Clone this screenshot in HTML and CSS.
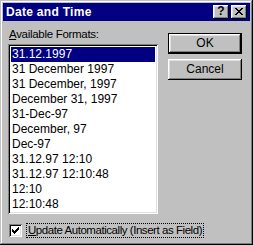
FILE: index.html
```html
<!DOCTYPE html>
<html>
<head>
<meta charset="utf-8">
<link rel="stylesheet" href="styles.css">
</head>
<body>
<div class="dialog">
  <div class="titlebar">
    <span class="title">Date and Time</span>
    <div class="tbtns">
      <div class="tbtn"><span class="q">?</span></div>
      <div class="tbtn">
        <svg width="8" height="7" viewBox="0 0 8 7" shape-rendering="crispEdges"><path d="M0 0h2v1h-2zM6 0h2v1h-2zM1 1h2v1h-2zM5 1h2v1h-2zM2 2h4v1h-4zM3 3h2v1h-2zM2 4h4v1h-4zM1 5h2v1h-2zM5 5h2v1h-2zM0 6h2v1h-2zM6 6h2v1h-2z" fill="#000"/></svg>
      </div>
    </div>
  </div>
  <div class="content">
    <div class="main">
      <div class="left">
        <div class="label"><u>A</u>vailable Formats:</div>
        <div class="list">
          <div class="item selected">31.12.1997</div>
          <div class="item">31 December 1997</div>
          <div class="item">31 December, 1997</div>
          <div class="item">December 31, 1997</div>
          <div class="item">31-Dec-97</div>
          <div class="item">December, 97</div>
          <div class="item">Dec-97</div>
          <div class="item">31.12.97 12:10</div>
          <div class="item">31.12.97 12:10:48</div>
          <div class="item">12:10</div>
          <div class="item">12:10:48</div>
        </div>
      </div>
      <div class="right">
        <div class="btn default"><div class="btn-inner">OK</div></div>
        <div class="btn"><div class="btn-inner">Cancel</div></div>
      </div>
    </div>
    <div class="check-row">
      <span class="checkbox">
        <svg width="7" height="7" viewBox="0 0 7 7" shape-rendering="crispEdges"><path d="M0 2h1v3h-1zM1 3h1v3h-1zM2 4h1v3h-1zM3 3h1v3h-1zM4 2h1v3h-1zM5 1h1v3h-1zM6 0h1v3h-1z" fill="#000"/></svg>
      </span>
      <span class="check-label"><u>U</u>pdate Automatically (Insert as Field)</span>
    </div>
  </div>
</div>
</body>
</html>
```

FILE: styles.css
```css
html, body {
  margin: 0;
  padding: 0;
  background: #c0c0c0;
}

.dialog {
  width: 253px;
  height: 245px;
  box-sizing: border-box;
  padding: 3px;
  background: #c0c0c0;
  box-shadow: inset -1px -1px #000, inset 1px 1px #c0c0c0, inset -2px -2px #808080, inset 2px 2px #fff;
  font-family: "Liberation Sans", Arial, sans-serif;
  font-size: 12px;
  color: #000;
  display: flex;
  flex-direction: column;
}

.titlebar {
  height: 18px;
  background: #000080;
  color: #fff;
  display: flex;
  align-items: center;
  justify-content: space-between;
  padding: 0 3px 0 3px;
}

.title {
  font-weight: bold;
  font-size: 12px;
  line-height: 18px;
  letter-spacing: 0.3px;
}

.tbtns {
  display: flex;
  gap: 2px;
}

.tbtn {
  width: 16px;
  height: 14px;
  box-sizing: border-box;
  background: #c0c0c0;
  box-shadow: inset -1px -1px #000, inset 1px 1px #fff, inset -2px -2px #808080, inset 2px 2px #dfdfdf;
  display: flex;
  align-items: center;
  justify-content: center;
  padding-bottom: 1px;
}

.q {
  color: #000;
  font-weight: bold;
  font-size: 12px;
  line-height: 11px;
}

.content {
  flex: 1;
  display: flex;
  flex-direction: column;
  padding: 6px 8px 0 5px;
}

.main {
  display: flex;
  gap: 10px;
}

.left {
  display: flex;
  flex-direction: column;
}

.label {
  line-height: 15px;
  padding-left: 1px;
  margin-bottom: 2px;
  font-size: 11.5px;
  letter-spacing: -0.3px;
}

.list {
  width: 150px;
  height: 170px;
  box-sizing: border-box;
  background: #fff;
  padding: 3px 3px 2px 3px;
  box-shadow: inset 1px 1px #808080, inset -1px -1px #fff, inset 2px 2px #000, inset -2px -2px #dfdfdf;
}

.item {
  height: 15px;
  line-height: 15px;
  padding-left: 1px;
  white-space: nowrap;
}

.item.selected {
  background: #000080;
  color: #fff;
}

.right {
  display: flex;
  flex-direction: column;
  gap: 5px;
  padding-top: 6px;
}

.btn {
  width: 74px;
  height: 21px;
  box-sizing: border-box;
  background: #c0c0c0;
  box-shadow: inset -1px -1px #000, inset 1px 1px #fff, inset -2px -2px #808080, inset 2px 2px #dfdfdf;
  display: flex;
}

.btn-inner {
  flex: 1;
  display: flex;
  align-items: center;
  justify-content: center;
  line-height: 15px;
}

.btn.default {
  box-shadow: inset 0 0 0 1px #000;
  padding: 1px;
}

.btn.default .btn-inner {
  box-shadow: inset -1px -1px #000, inset 1px 1px #fff, inset -2px -2px #808080, inset 2px 2px #dfdfdf;
}

.check-row {
  display: flex;
  align-items: center;
  gap: 4px;
  margin-top: 9px;
  padding-left: 1px;
}

.checkbox {
  width: 13px;
  height: 13px;
  box-sizing: border-box;
  background: #fff;
  box-shadow: inset 1px 1px #808080, inset -1px -1px #fff, inset 2px 2px #000, inset -2px -2px #dfdfdf;
  display: flex;
  align-items: center;
  justify-content: center;
}

.check-label {
  border: 1px dotted #000;
  padding: 0 1px;
  line-height: 13px;
  white-space: nowrap;
  font-size: 11.5px;
  letter-spacing: -0.45px;
}
```
